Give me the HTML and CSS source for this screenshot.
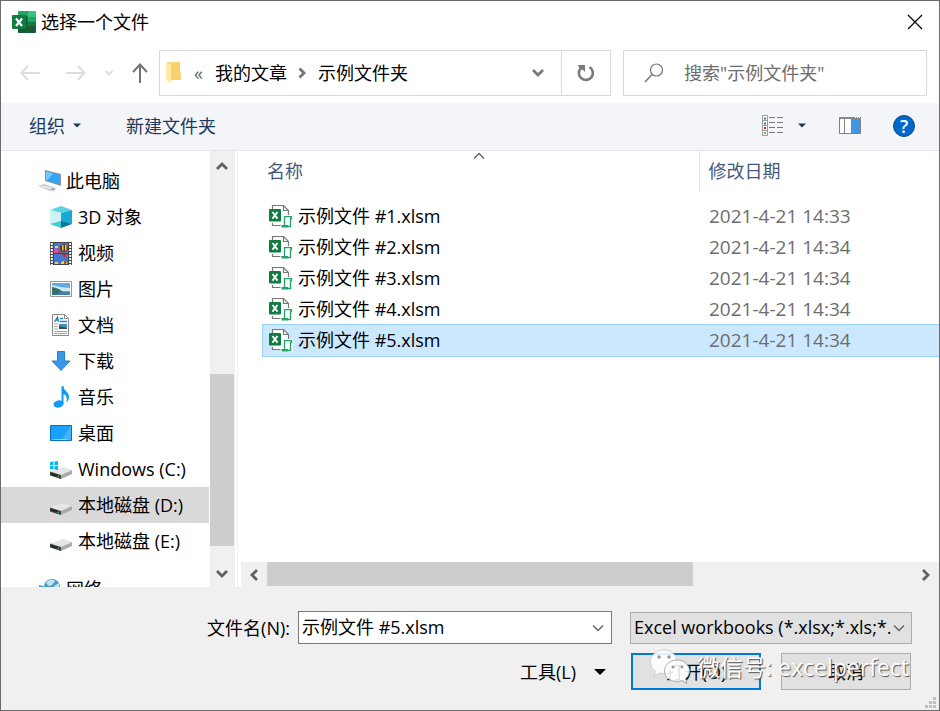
FILE: index.html
```html
<!DOCTYPE html>
<html lang="zh-CN">
<head>
    <meta charset="UTF-8">
    <meta name="viewport" content="width=device-width, initial-scale=1.0">
    <title>选择一个文件</title>
    <link rel="stylesheet" href="styles.css">
</head>
<body>
    <!-- Shared icons -->
    <svg class="sprite" width="0" height="0" aria-hidden="true">
        <symbol id="xlsm" viewBox="0 0 24 24">
            <path d="M3.500 5V1.500h11l5 5V21.500h-16V19" fill="#fff" stroke="#777" stroke-width="1.200"/>
            <path d="M14.500 1.500v5h5" fill="none" stroke="#777" stroke-width="1.200"/>
            <rect x="11.500" y="11" width="12" height="13" fill="#fff"/>
            <path d="M15.500 21v-8.300h7v1.800h-1v8h-3" fill="#fff" stroke="#21a366" stroke-width="1.300"/>
            <path d="M12.500 21h6.500v2.500h-6.500z" fill="#21a366"/>
            <rect y="5" width="12" height="12.500" rx="1" fill="#107c41"/>
            <path d="M3.500 8l5 6.600M8.500 8l-5 6.600" stroke="#fff" stroke-width="1.900"/>
        </symbol>
        <symbol id="drive" viewBox="0 0 22 22">
            <path d="M0 13.500L13 9l9 3-11 5z" fill="#e6e6e8"/>
            <path d="M0 13.500l11 3.500v4L0 17.500z" fill="#3c3f3e"/>
            <path d="M11 17l11-5v4l-11 5z" fill="#a9aaac"/>
            <path d="M1 15l8 2.500v1.500l-8-2.500z" fill="#222"/>
            <path d="M7.500 17.500h1.500v1.500h-1.500z" fill="#39b54a"/>
        </symbol>
        <symbol id="chevron-down" viewBox="0 0 14 10">
            <path d="M2 2l5 5 5-5" fill="none" stroke="currentColor" stroke-width="2.800"/>
        </symbol>
        <symbol id="chevron-thin" viewBox="0 0 14 10">
            <path d="M2 2.500l5 5 5-5" fill="none" stroke="currentColor" stroke-width="1.300"/>
        </symbol>
        <symbol id="triangle" viewBox="0 0 12 6">
            <path d="M0 0h12L6 6z" fill="currentColor"/>
        </symbol>
    </svg>

    <!-- Title bar -->
    <header class="title-bar">
        <svg width="24" height="22" viewBox="0 0 24 22">
            <path d="M6 1q0-1 1-1h9v7H6z" fill="#21a366"/>
            <path d="M16 0h7q1 0 1 1v6h-8z" fill="#33c481"/>
            <path d="M6 6h10v9H6z" fill="#107c41"/>
            <path d="M16 6h8v5h-8z" fill="#21a366"/>
            <path d="M16 11h8v5h-8z" fill="#107c41"/>
            <path d="M6 15h18v6q0 1-1 1H7q-1 0-1-1z" fill="#185c37"/>
            <path d="M6 5h9v14H6z" fill="#0b5c30"/>
            <rect y="4" width="14" height="14" rx="1" fill="#107c41"/>
            <path d="M4 7.500l6 7.500M10 7.500l-6 7.500" stroke="#fff" stroke-width="2.200"/>
        </svg>
        <h1>选择一个文件</h1>
        <button class="close" aria-label="关闭">
            <svg width="16" height="16" viewBox="0 0 16 16"><path d="M1 1l14 14M15 1L1 15" stroke="#000" stroke-width="1.200"/></svg>
        </button>
    </header>

    <!-- Navigation -->
    <nav class="nav-bar">
        <div class="history">
            <button aria-label="后退" disabled><svg width="20" height="16" viewBox="0 0 20 16"><path d="M8 1L1.500 8 8 15M2 8h18" fill="none" stroke="#ddd" stroke-width="2"/></svg></button>
            <button aria-label="前进" disabled><svg width="20" height="16" viewBox="0 0 20 16"><path d="M12 1l6.500 7-6.500 7M0 8h18" fill="none" stroke="#ddd" stroke-width="2"/></svg></button>
            <button class="recent" aria-label="最近浏览的位置" disabled><svg width="10" height="8" viewBox="0 0 14 10"><use href="#chevron-down"/></svg></button>
            <button class="up" aria-label="上移"><svg width="16" height="20" viewBox="0 0 16 20"><path d="M1 9l7-7.500L15 9M8 2v18" fill="none" stroke="#737373" stroke-width="2"/></svg></button>
        </div>
        <div class="address">
            <svg class="folder" width="16" height="22" viewBox="0 0 16 22">
                <path d="M1 0h13v10l1 1v7H1z" fill="#fada7a"/>
                <path d="M5 2l9-2v18H5z" fill="#f6d06a"/>
                <path d="M0 1l5 2v18l-5-3z" fill="#ffe9a6"/>
            </svg>
            <span class="laquo">«</span>
            <a href="#">我的文章</a>
            <svg class="crumb" width="8" height="12" viewBox="0 0 8 12"><path d="M1.500 1.500L6 6l-4.500 4.500" fill="none" stroke="#737373" stroke-width="2.800"/></svg>
            <a href="#">示例文件夹</a>
            <button class="drop" aria-label="以前的位置"><svg width="14" height="10"><use href="#chevron-down"/></svg></button>
            <button class="refresh" aria-label="刷新">
                <svg width="18" height="18" viewBox="0 0 18 18">
                    <path d="M3.500 4.500A7 7 0 1 0 12.500 3" fill="none" stroke="#7a7a7a" stroke-width="2.600"/>
                    <path d="M1 1h7v7L5.500 5.500 3 6z" fill="#7a7a7a"/>
                </svg>
            </button>
        </div>
        <label class="search">
            <svg width="20" height="20" viewBox="0 0 20 20"><circle cx="12.500" cy="7" r="6" fill="none" stroke="#777" stroke-width="1.200"/><path d="M8 11.500L1 19" stroke="#777" stroke-width="1.500"/></svg>
            <input type="text" placeholder='搜索"示例文件夹"' aria-label="搜索">
        </label>
    </nav>

    <!-- Toolbar -->
    <div class="toolbar">
        <button class="organize">组织 <svg width="8" height="5"><use href="#triangle"/></svg></button>
        <button>新建文件夹</button>
        <div class="view-tools">
            <button aria-label="更改视图">
                <svg width="22" height="22" viewBox="0 0 22 22">
                    <path d="M.5.500h5v20h-5zM.5 5.500h5M.5 10.500h5M.5 15.500h5" fill="#fff" stroke="#999"/>
                    <path d="M2 2.500h2v2H2z" fill="#2b7fa8"/><path d="M2 7.500h2v2H2z" fill="#447799"/>
                    <path d="M2 12h2v2H2z" fill="#d02b10"/><path d="M2 17h2v2H2z" fill="#75a85a"/>
                    <path d="M7 2.500h6M15 2.500h6M7 7.500h6M15 7.500h6M7 12.500h6M15 12.500h6M7 17.500h6M15 17.500h6" stroke="#7b7b7b"/>
                </svg>
            </button>
            <button class="more" aria-label="更多选项"><svg width="8" height="5"><use href="#triangle"/></svg></button>
            <button class="pane" aria-label="显示预览窗格">
                <svg width="22" height="17" viewBox="0 0 22 17">
                    <path d="M.5.500h21v16H.5z" fill="#fff" stroke="#808080"/>
                    <path d="M0 0h22v2H0zM5 2h1v14H5z" fill="#888"/>
                    <path d="M12 2h9v14h-9z" fill="#3f97e4"/>
                    <path d="M16 .5h1M18 .5h1M20 .5h1" stroke="#fff"/>
                </svg>
            </button>
            <button class="help" aria-label="帮助">?</button>
        </div>
    </div>

    <main>
        <!-- Folder tree -->
        <ul class="tree">
            <li class="root">
                <svg width="24" height="22" viewBox="0 0 24 22">
                    <path d="M7 0l16 4v12L7 11z" fill="#8b9299"/>
                    <path d="M8 1.500l14 3.500v9.500L8 10z" fill="#2ea7fb"/><path d="M8 1.500l7 2L9.500 10 8 9.500z" fill="#72c9ff"/>
                    <path d="M0 16l6-2 12 4-6 3z" fill="#c5cbd0"/><path d="M2 16.500l4-1 9 2.500-3 1.500" fill="#e4e8eb"/>
                    <path d="M12 19.500l3-1.500 3 1-3 2z" fill="#aab1b8"/>
                </svg>
                此电脑
            </li>
            <li>
                <svg width="22" height="22" viewBox="0 0 22 22">
                    <path d="M0 4l11-4 11 4-11 3z" fill="#5cd3e0"/><path d="M0 4l11 3v9L0 18z" fill="#d0f1f3"/>
                    <path d="M22 4L11 7v9l11 2z" fill="#16abd0"/><path d="M0 18l11-3v7z" fill="#46c8d5"/><path d="M11 15l11 3-11 4z" fill="#0a7795"/>
                </svg>
                3D 对象
            </li>
            <li>
                <svg width="22" height="23" viewBox="0 0 22 23">
                    <path d="M0 0h22v23H0z" fill="#444"/>
                    <path d="M1.800 1v22M20.200 1v22" stroke="#fff" stroke-width="2" stroke-dasharray="2 1"/>
                    <path d="M4 1h14v10H4zM4 12h14v10H4z" fill="#4179d3"/>
                    <path d="M4 8l2-3 3 4-1 2H4z" fill="#e34ba6"/><path d="M8 9h4v2H8z" fill="#d93921"/>
                    <circle cx="14" cy="6" r="3.800" fill="#5b2d1c"/><path d="M12 3h1.500v6L12 8zM15 3h1.500v5L15 9z" fill="#ffcd24"/>
                    <path d="M5 4h3v2H5z" fill="#ffd12b"/>
                    <path d="M12 12h5l-2.500 3.500z" fill="#c9301e"/>
                    <path d="M11 21q3-5 6 0v1h-6zM5 20h3v2H5z" fill="#ffd12b"/><path d="M14 19h2v3h-2z" fill="#d93921"/>
                </svg>
                视频
            </li>
            <li>
                <svg width="22" height="16" viewBox="0 0 22 16">
                    <path d="M.5.500h21v15H.5z" fill="#fff" stroke="#999"/>
                    <path d="M2 2h18v12H2z" fill="#5fa9e4"/><path d="M2 4q9 3 18 3v3H2z" fill="#cee9f5"/>
                    <path d="M2 6q7 1 11 5h7v3H2z" fill="#36706a"/><path d="M10 11h10v3H6z" fill="#477fac"/>
                </svg>
                图片
            </li>
            <li>
                <svg width="22" height="22" viewBox="0 0 22 22">
                    <path d="M2.500.500h12l4 4v17h-16z" fill="#fff" stroke="#8a8a8a"/>
                    <path d="M14.500.500v4h4" fill="none" stroke="#8a8a8a"/>
                    <path d="M4.500 8l3-5 1 5M6 6h2.500M10 4.500h3M10 7.500h7" fill="none" stroke="#2383c7" stroke-width="1.300"/>
                    <path d="M4 10h4M4 12.500h4M4 15h4M4 17.500h13M4 19.500h13" stroke="#a0a7ac"/>
                    <path d="M9 10h8v5H9z" fill="#498fbe"/><path d="M9 12l8 2v1H9z" fill="#314f58"/>
                </svg>
                文档
            </li>
            <li>
                <svg width="22" height="20" viewBox="0 0 22 20"><path d="M7.500.500h7V10H20l-9 9.500L2 10h5.500z" fill="#3997e8" stroke="#2780cd"/></svg>
                下载
            </li>
            <li>
                <svg width="22" height="22" viewBox="0 0 22 22">
                    <path d="M11.500 0h2c0 5 6 6 5.500 11 0 2-1 4-2.500 5.500C17.500 11 16 9 13.500 8v10h-2z" fill="#119af5"/>
                    <ellipse cx="8.500" cy="18" rx="5" ry="3.700" fill="#119af5" transform="rotate(-12 8.500 18)"/>
                </svg>
                音乐
            </li>
            <li>
                <svg width="22" height="16" viewBox="0 0 22 16">
                    <path d="M.5.500h21v15H.5z" fill="#1aa1fa" stroke="#0870b9"/><path d="M21 1v13h-9z" fill="#43b5ff"/>
                    <path d="M2 14.500h18" stroke="#fff" stroke-dasharray="1 1 14 1" opacity=".5"/>
                </svg>
                桌面
            </li>
            <li>
                <svg width="22" height="22" viewBox="0 0 22 22">
                    <use href="#drive"/>
                    <path d="M0 4l3.500-.5v3.500H0zM4.500 3.500L8 3v4H4.500zM0 8h3.500v3.500L0 11zM4.500 8H8v4l-3.500-.5z" fill="#00b7f1"/>
                </svg>
                Windows (C:)
            </li>
            <li class="selected"><svg width="22" height="22"><use href="#drive"/></svg> 本地磁盘 (D:)</li>
            <li><svg width="22" height="22"><use href="#drive"/></svg> 本地磁盘 (E:)</li>
            <li class="root network">
                <svg width="24" height="22" viewBox="0 0 24 22">
                    <circle cx="14" cy="9" r="8" fill="#4c9cc4"/><path d="M8 5q5-6 9-2l-3 4-3 1zM16 8l5-3v6l-4 2z" fill="#c3e5ee"/>
                    <path d="M1 7l11 3v8L1 15z" fill="#3d9bd0"/>
                </svg>
                网络
            </li>
        </ul>

        <div class="v-scroll">
            <button aria-label="向上滚动"><svg class="flip" width="14" height="10"><use href="#chevron-down"/></svg></button>
            <div class="thumb"></div>
            <button aria-label="向下滚动"><svg width="14" height="10"><use href="#chevron-down"/></svg></button>
        </div>

        <!-- File list -->
        <section class="files">
            <div class="list">
                <table>
                    <thead>
                        <tr>
                            <th class="name">名称 <svg class="sort" width="14" height="10"><use href="#chevron-thin"/></svg></th>
                            <th class="date">修改日期</th>
                        </tr>
                    </thead>
                    <tbody>
                        <tr><td><svg width="24" height="24"><use href="#xlsm"/></svg>示例文件 #1.xlsm</td><td>2021-4-21 14:33</td></tr>
                        <tr><td><svg width="24" height="24"><use href="#xlsm"/></svg>示例文件 #2.xlsm</td><td>2021-4-21 14:34</td></tr>
                        <tr><td><svg width="24" height="24"><use href="#xlsm"/></svg>示例文件 #3.xlsm</td><td>2021-4-21 14:34</td></tr>
                        <tr><td><svg width="24" height="24"><use href="#xlsm"/></svg>示例文件 #4.xlsm</td><td>2021-4-21 14:34</td></tr>
                        <tr class="selected"><td><svg width="24" height="24"><use href="#xlsm"/></svg>示例文件 #5.xlsm</td><td>2021-4-21 14:34</td></tr>
                    </tbody>
                </table>
            </div>
            <div class="h-scroll">
                <button aria-label="向左滚动"><svg class="left" width="14" height="10"><use href="#chevron-down"/></svg></button>
                <div class="track"><div class="thumb"></div></div>
                <button aria-label="向右滚动"><svg class="right" width="14" height="10"><use href="#chevron-down"/></svg></button>
            </div>
        </section>
    </main>

    <!-- File name and actions -->
    <footer>
        <div class="fields">
            <label for="fileName">文件名(N):</label>
            <div class="combo">
                <input type="text" id="fileName" value="示例文件 #5.xlsm">
                <button aria-label="文件名列表"><svg width="14" height="10"><use href="#chevron-thin"/></svg></button>
            </div>
            <div class="file-type">
                <select aria-label="文件类型"><option>Excel workbooks (*.xlsx;*.xls;*.</option></select>
                <svg width="14" height="10"><use href="#chevron-thin"/></svg>
            </div>
        </div>
        <div class="actions">
            <button class="tools">工具(L) <svg width="12" height="6"><use href="#triangle"/></svg></button>
            <button class="push open">打开(O)</button>
            <button class="push">取消</button>
            <div class="watermark">
                <svg width="40" height="36" viewBox="0 0 40 36">
                    <path d="M14 1C6 1 .5 6 .5 13c0 4 2 7 5 9.500L4 27l6-3q3 1 6 .5L27 12C26 5 21 1 14 1z" fill="#fff" fill-opacity=".88" stroke="#bbb" stroke-width=".6"/>
                    <path d="M27 11c-7 0-12.500 5-12.500 11S20 32.500 27 32.500q3 0 5-1l5 3-1.500-5c2.500-2 4-4.500 4-7.500 0-6-5.500-11-12.500-11z" fill="#fff" fill-opacity=".88" stroke="#999" stroke-width=".8"/>
                    <g fill="#999"><circle cx="9" cy="8" r="1.800"/><circle cx="19" cy="8" r="1.800"/><circle cx="23" cy="18" r="1.500"/><circle cx="32" cy="18" r="1.500"/></g>
                </svg>
                <span>微信号: excelperfect</span>
            </div>
        </div>
        <svg class="grip" width="12" height="12" viewBox="0 0 12 12"><path d="M8 0h3v3H8zM4 4h3v3H4zM8 4h3v3H8zM0 8h3v3H0zM4 8h3v3H4zM8 8h3v3H8z" fill="#bfbfbf"/></svg>
    </footer>
</body>
</html>
```
FILE: styles.css
```css
/* General Styles */
* {
    margin: 0;
    padding: 0;
    box-sizing: border-box;
}

body {
    display: flex;
    flex-direction: column;
    height: 100vh;
    overflow: hidden;
    border: 1px solid #6b6b6b;
    background-color: #fff;
    color: #000;
    font-family: "Open Sans", "Noto Sans CJK SC", sans-serif;
    font-size: 18px;
    line-height: 24px;
}

button, input, select {
    font: inherit;
    color: inherit;
    border: none;
    background: none;
    outline: none;
}

button {
    display: flex;
    align-items: center;
    justify-content: center;
}

svg {
    display: block;
    flex: none;
}

a {
    color: inherit;
    text-decoration: none;
}

.sprite {
    position: absolute;
}

/* Title Bar */
.title-bar {
    display: flex;
    align-items: center;
    height: 42px;
    flex: none;
    padding: 0 16px 0 11px;
}

.title-bar h1 {
    margin-left: 5px;
    font-size: 18px;
    font-weight: normal;
}

.close {
    margin-left: auto;
}

/* Navigation */
.nav-bar {
    display: flex;
    flex: none;
    padding: 7px 12px 7px 19px;
}

.history {
    display: flex;
    align-items: center;
    width: 139px;
    gap: 26px;
}

.history .recent {
    margin-left: -8px;
    color: #ddd;
}

.history .up {
    margin-left: -8px;
}

.address {
    display: flex;
    align-items: center;
    flex: 1;
    height: 46px;
    border: 1px solid #d9d9d9;
    padding-left: 6px;
}

.laquo {
    margin: 0 12px;
    color: #666;
}

.crumb {
    margin: 0 12px 0 11px;
}

.drop {
    width: 46px;
    height: 44px;
    margin-left: auto;
    color: #777;
}

.refresh {
    width: 49px;
    height: 44px;
    border-left: 1px solid #d9d9d9;
}

.search {
    display: flex;
    align-items: center;
    width: 304px;
    margin-left: 12px;
    padding-left: 20px;
    gap: 20px;
    border: 1px solid #d9d9d9;
}

.search input {
    flex: 1;
    min-width: 0;
}

.search input::placeholder {
    color: #6d6d6d;
    opacity: 1;
}

/* Toolbar */
.toolbar {
    display: flex;
    align-items: center;
    flex: none;
    height: 48px;
    padding: 0 24px 2px 28px;
    gap: 45px;
    background-color: #f4f5f8;
    border-bottom: 1px solid #e5e5e5;
    color: #1e395b;
}

.organize {
    gap: 8px;
}

.view-tools {
    display: flex;
    align-items: center;
    margin-left: auto;
}

.more {
    margin-left: 14px;
}

.pane {
    margin-left: 33px;
}

.help {
    width: 22px;
    height: 22px;
    margin-left: 32px;
    border: 1px solid #104b83;
    border-radius: 50%;
    background-color: #0067cb;
    color: #fff;
    font-weight: 600;
}

/* Main Area */
main {
    display: flex;
    flex: 1;
    min-height: 0;
}

/* Folder Tree */
.tree {
    width: 208px;
    padding-top: 12px;
    list-style: none;
    overflow: hidden;
}

.tree li {
    display: flex;
    align-items: center;
    height: 36px;
    padding-left: 49px;
    gap: 6px;
    white-space: nowrap;
}

.tree .root {
    padding-left: 37px;
    gap: 4px;
}

.tree .selected {
    background-color: #d9d9d9;
}

.tree .network {
    margin-top: 12px;
}

/* Scroll Bars */
.v-scroll {
    display: flex;
    flex-direction: column;
    width: 25px;
    margin-left: 1px;
    background-color: #f0f0f0;
    color: #606060;
}

.v-scroll button {
    width: 24px;
    height: 26px;
}

.v-scroll button:first-child {
    height: 30px;
}

.v-scroll .thumb {
    width: 24px;
    height: 172px;
    margin: auto 0 15px;
    background-color: #cdcdcd;
}

.flip {
    transform: rotate(180deg);
}

.left {
    transform: rotate(90deg);
}

.right {
    transform: rotate(-90deg);
}

.h-scroll {
    display: flex;
    height: 25px;
    background-color: #f0f0f0;
    color: #606060;
}

.h-scroll button {
    width: 26px;
}

.h-scroll .track {
    flex: 1;
}

.h-scroll .thumb {
    width: 66%;
    height: 24px;
    background-color: #cdcdcd;
}

/* File List */
.files {
    display: flex;
    flex-direction: column;
    flex: 1;
    min-width: 0;
    margin-left: 2px;
    padding-left: 3px;
    border-left: 1px solid #f0f0f0;
}

.list {
    flex: 1;
    padding-left: 22px;
    overflow: hidden;
}

table {
    width: 100%;
    border-collapse: collapse;
    table-layout: fixed;
}

th {
    position: relative;
    height: 40px;
    font-weight: normal;
    text-align: left;
    color: #44597a;
}

th.name {
    padding-left: 4px;
}

th.date {
    width: 240px;
    padding-left: 9px;
    border-left: 1px solid #e5e5e5;
}

.sort {
    position: absolute;
    top: 0;
    left: 50%;
    margin-left: -9px;
    color: #606060;
    transform: rotate(180deg);
}

tbody::before {
    content: "";
    display: block;
    height: 10px;
}

td {
    height: 31px;
    padding-left: 35px;
    padding-bottom: 2px;
    position: relative;
}

td svg {
    position: absolute;
    left: 6px;
    top: 3px;
}

td:last-child {
    padding-left: 10px;
    font-size: 19px;
    color: #6d6d6d;
}

tbody .selected {
    background-color: #cce8ff;
    outline: 1px solid #99d1ff;
}

/* Footer */
footer {
    position: relative;
    flex: none;
    padding: 24px 27px 20px;
    background-color: #f0f0f0;
}

.fields {
    display: flex;
    align-items: center;
    justify-content: flex-end;
}

.fields label {
    margin-right: 8px;
}

.combo {
    display: flex;
    width: 314px;
    height: 33px;
    border: 1px solid #7a7a7a;
    background-color: #fff;
}

.combo input {
    flex: 1;
    min-width: 0;
    padding: 0 0 2px 3px;
}

.combo button {
    width: 26px;
    color: #606060;
}

.file-type {
    position: relative;
    width: 282px;
    height: 32px;
    margin-left: 18px;
}

.file-type select {
    width: 100%;
    height: 100%;
    padding: 0 20px 2px 3px;
    appearance: none;
    border: 1px solid #adadad;
    background-color: #e1e1e1;
}

.file-type svg {
    position: absolute;
    right: 6px;
    top: 11px;
    color: #606060;
}

.actions {
    position: relative;
    display: flex;
    align-items: center;
    justify-content: flex-end;
    margin: 9px 1px 0 0;
    gap: 20px;
}

.tools {
    gap: 18px;
    margin-right: 5px;
}

.push {
    width: 130px;
    height: 37px;
    border: 1px solid #adadad;
    background-color: #e1e1e1;
}

.push.open {
    border: 2px solid #0078d7;
}

/* Account mark over the buttons */
.watermark {
    position: absolute;
    right: 2px;
    top: -4px;
    display: flex;
    align-items: center;
    gap: 7px;
    color: #fff;
    font-size: 23px;
    line-height: 36px;
    white-space: nowrap;
    text-shadow: 1px 1px 1px #555;
    pointer-events: none;
}

.grip {
    position: absolute;
    right: 2px;
    bottom: 1px;
}
```
